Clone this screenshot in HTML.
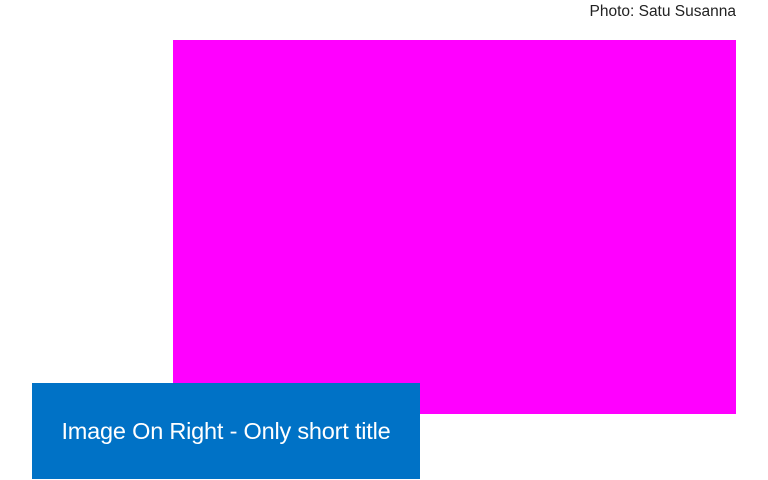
<!DOCTYPE html>
<html><head><style>
html,body{margin:0;padding:0;width:768px;height:480px;overflow:hidden;background:#fff;font-family:"Liberation Sans",sans-serif}
.credit{position:absolute;right:32px;top:3px;font-size:15.5px;color:#222}
.img{position:absolute;left:173px;top:40px;width:563px;height:374px;background:#f0f}
.box{position:absolute;left:32px;top:383px;width:388px;height:96px;background:#0072c6;color:#fff;font-size:23.5px;letter-spacing:-0.2px;text-align:center;line-height:96px}
</style></head><body>
<div class="credit">Photo: Satu Susanna</div>
<div class="img"></div>
<div class="box">Image On Right - Only short title</div>
</body></html>
